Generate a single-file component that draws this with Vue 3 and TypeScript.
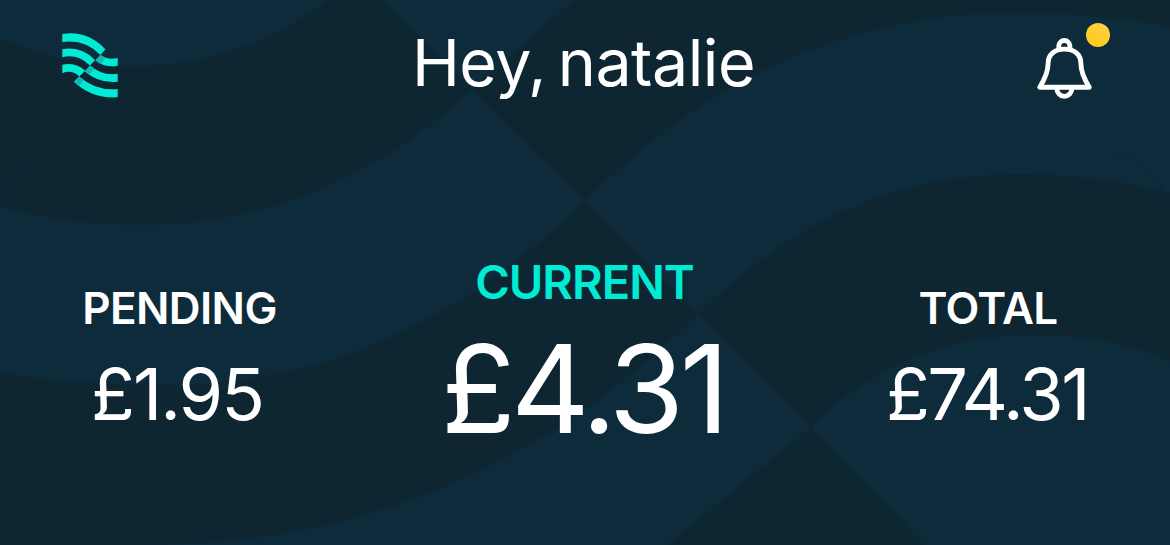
<script setup lang="ts">
interface Balance {
  id: string
  label: string
  amount: string
}

const balances: Balance[] = [
  { id: 'pending', label: 'PENDING', amount: '£1.95' },
  { id: 'current', label: 'CURRENT', amount: '£4.31' },
  { id: 'total', label: 'TOTAL', amount: '£74.31' },
]
</script>

<template>
  <main class="screen">
    <svg class="backdrop" viewBox="0 0 1170 545" aria-hidden="true">
      <g class="wave">
        <path d="M0 38Q65 66 135 66Q240 66 328 0H0Z" />
        <path d="M0 207Q68 225 140 225Q325 225 472 90L585 201C467 315 335 385 160 385Q75 385 0 373Z" />
        <path d="M0 536Q65 545 140 545H667L811 427L698 314C530 480 345 545 140 545Q65 545 0 536Z" />
        <path d="M383 0H574L472 90Z" />
        <path d="M585 201C710 75 855 13 1014 13Q1095 13 1170 27V193Q1090 173 1014 174C895 176 790 222 698 314Z" />
        <path d="M811 427C875 363 950 335 1036 335Q1106 335 1170 361V545H925Z" />
      </g>
      <path class="corner" d="M2 205Q12 158 58 155M1112 155Q1158 158 1168 205" />
    </svg>

    <header class="top">
      <svg class="logo" viewBox="35 37 167 196" aria-hidden="true">
        <path d="M35 40Q110 28 165 86L150 103Q102 54 35 64Z" />
        <path d="M35 86Q94 76 134 119L118 135Q82 99 35 110Z" />
        <path d="M35 133Q75 123 104 151L86 168Q65 147 35 158Z" />
        <path d="M150 103Q173 120 202 112V136Q161 143 135 119Z" />
        <path d="M119 135Q155 167 202 160V184Q145 190 103 152Z" />
        <path d="M86 168Q135 212 202 206V231Q125 236 70 184Z" />
        <g class="fold">
          <path d="M150 103L166 112L153 129L135 119Z" />
          <path d="M119 135L132 146L115 163L103 152Z" />
          <path d="M86 168L100 179L86 196L70 184Z" />
        </g>
      </svg>
      <h1 class="greeting">Hey, natalie</h1>
      <div class="alerts">
        <svg class="bell" viewBox="50 80 170 188" aria-hidden="true">
          <path d="M61 230H209C194 206 184 184 184 160C184 132 164 116 135 116C106 116 86 132 86 160C86 184 76 206 61 230Z" />
          <path d="M118 115V107A16.5 16.5 0 0 1 151 107V115" />
          <path d="M112 234A22.5 23 0 0 0 157 234" />
        </svg>
        <span class="dot"></span>
      </div>
    </header>

    <section class="balances">
      <div v-for="b in balances" :key="b.id" class="balance" :class="b.id">
        <span class="label">{{ b.label }}</span>
        <span class="amount">{{ b.amount }}</span>
      </div>
    </section>
  </main>
</template>

<style>
body {
  margin: 0;
}
</style>

<style scoped>
.screen {
  position: relative;
  width: 1170px;
  height: 545px;
  overflow: hidden;
  background: #0e2632;
  color: #fff;
  font-family: Inter, "Liberation Sans", sans-serif;
}
.backdrop {
  position: absolute;
  inset: 0;
  width: 1170px;
  height: 545px;
}
.wave {
  fill: #0e2b3b;
}
.corner {
  fill: none;
  stroke: #0d2532;
  stroke-width: 1;
}
.top {
  position: relative;
  display: grid;
  grid-template-columns: 359px 451px 360px;
  height: 258px;
  box-sizing: border-box;
  padding-top: 23px;
  align-items: start;
}
.logo {
  width: 56px;
  height: 65px;
  margin: 9.5px 0 0 61.5px;
  fill: #00ead4;
}
.fold {
  fill: #12b9b0;
}
.greeting {
  margin: 0;
  padding-right: 2px;
  font-size: 64.5px;
  line-height: 80px;
  font-weight: 400;
  text-align: center;
  white-space: nowrap;
  letter-spacing: -0.5px;
  word-spacing: -6px;
}
.alerts {
  position: relative;
  margin: 14px 0 0 226px;
  width: 57px;
  height: 63px;
}
.bell {
  display: block;
  width: 57px;
  height: 63px;
  fill: none;
  stroke: #fff;
  stroke-width: 14.5;
  stroke-linejoin: round;
}
.dot {
  position: absolute;
  left: 50px;
  top: -14px;
  width: 24px;
  height: 24px;
  border-radius: 50%;
  background: linear-gradient(25deg, #ffca18, #ffd044);
}
.balances {
  position: relative;
  display: grid;
  grid-template-columns: 359px 451px 356px;
}
.balance {
  display: flex;
  flex-direction: column;
  align-items: center;
  gap: 28px;
  padding-top: 28px;
  white-space: nowrap;
}
.label {
  font-size: 44px;
  line-height: 44px;
  font-weight: 600;
  letter-spacing: -0.6px;
}
.amount {
  font-size: 72px;
  line-height: 72px;
  font-weight: 400;
  letter-spacing: -2px;
  padding-right: 5px;
}
.total .amount {
  letter-spacing: -2.5px;
  padding-right: 2px;
}
.current {
  gap: 23px;
  padding-top: 0;
}
.current .label {
  font-size: 47px;
  line-height: 47px;
  letter-spacing: -1px;
  color: #00ead4;
}
.current .amount {
  font-size: 122px;
  line-height: 122px;
  letter-spacing: -4.4px;
  padding-right: 3px;
}
</style>
